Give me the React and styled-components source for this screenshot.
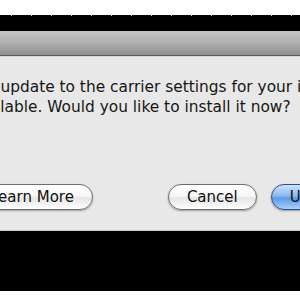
import React from "react";
import styled, { createGlobalStyle } from "styled-components";

const Global = createGlobalStyle`
  html, body { margin: 0; padding: 0; background: #fff; }
  body { width: 300px; height: 300px; overflow: hidden; }
  * { box-sizing: border-box; }
`;

const Page = styled.div`
  width: 300px;
  height: 300px;
  overflow: hidden;
  background: #fff;
  display: flex;
  flex-direction: column;
`;

const TopGap = styled.div`
  height: 15px;
  background: #fff;
  flex: none;
`;

const Backdrop = styled.div`
  height: ${(p) => p.$h}px;
  flex: none;
  background-color: #000;
  background-image: ${(p) =>
    p.$dots
      ? "linear-gradient(to right, transparent 11px, #d8d8d8 11px, #d8d8d8 12px, transparent 12px)"
      : "none"};
  background-size: 20px 1px;
  background-repeat: repeat-x;
  background-position: 0 0;
`;

const Dialog = styled.div`
  flex: none;
  display: flex;
  flex-direction: column;
`;

const TitleBar = styled.div`
  height: 25px;
  background: linear-gradient(to bottom, #c6c6c6 0%, #b1b1b1 45%, #8f8f8f 100%);
  border-bottom: 1px solid #585858;
`;

const Body = styled.div`
  height: 175px;
  background: #e8e8e8;
  border-top: 1px solid #d6d6d6;
  border-bottom: 1px solid #c9c9c9;
  padding-top: 20px;
  display: flex;
  flex-direction: column;
  font-family: "DejaVu Sans", "Liberation Sans", sans-serif;
  color: #161616;
  overflow: hidden;
`;

const Line = styled.div`
  font-size: 15.4px;
  line-height: 20px;
  white-space: nowrap;
  margin-left: ${(p) => p.$shift}px;
`;

const ButtonRow = styled.div`
  display: flex;
  gap: 14px;
  margin-top: 67px;
  margin-left: -29px;
  white-space: nowrap;
`;

const Button = styled.button`
  flex: none;
  height: 26px;
  padding: 0 18px;
  border-radius: 13px;
  font-family: "DejaVu Sans", "Liberation Sans", sans-serif;
  font-size: 15px;
  line-height: 24px;
  color: #111;
  border: 1px solid ${(p) => (p.$primary ? "#2b4d8f" : "#6e6e6e")};
  background: ${(p) =>
    p.$primary
      ? "linear-gradient(to bottom, #cfe2fb 0%, #8ab8f0 45%, #5e9ae6 55%, #a6d0fb 100%)"
      : "linear-gradient(to bottom, #ffffff 0%, #f7f7f7 45%, #e6e6e6 55%, #ffffff 100%)"};
  box-shadow: 0 1px 2px rgba(0, 0, 0, 0.35);
  margin-left: ${(p) => p.$push || 0}px;
`;

export default function App() {
  return (
    <>
      <Global />
      <Page>
        <TopGap />
        <Backdrop $h={16} $dots />
        <Dialog>
          <TitleBar />
          <Body>
            <Line $shift={-86}>A software update to the carrier settings for your iPhone is</Line>
            <Line $shift={-32}>available. Would you like to install it now?</Line>
            <ButtonRow>
              <Button>Learn More</Button>
              <Button $push={61}>Cancel</Button>
              <Button $primary>Update</Button>
            </ButtonRow>
          </Body>
        </Dialog>
        <Backdrop $h={60} />
      </Page>
    </>
  );
}
